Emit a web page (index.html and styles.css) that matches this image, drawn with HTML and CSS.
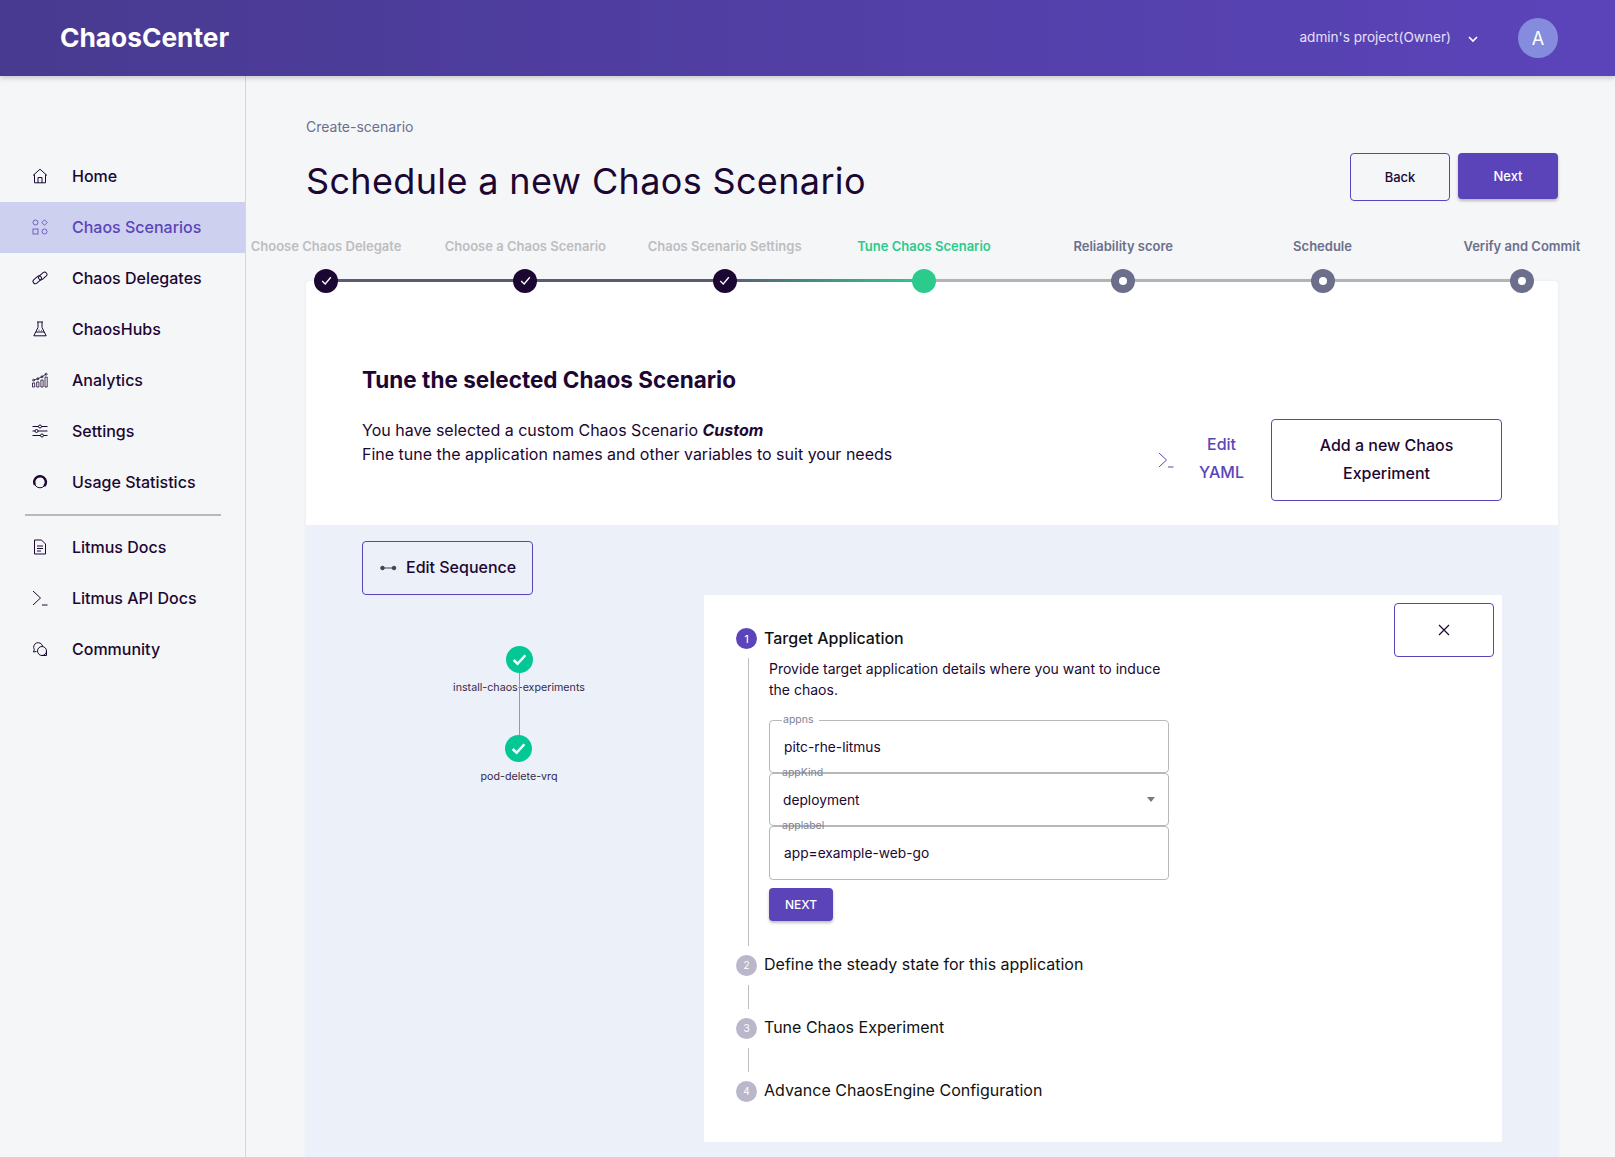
FILE: index.html
```html
<!DOCTYPE html>
<html lang="en">
<head>
  <meta charset="UTF-8">
  <meta name="viewport" content="width=device-width, initial-scale=1.0">
  <title>ChaosCenter</title>
  <link rel="stylesheet" href="styles.css">
</head>
<body>

<header class="topbar">
  <div class="logo">ChaosCenter</div>
  <div class="project">
    <span class="project-name">admin's project(Owner)</span>
    <svg class="chevron" viewBox="0 0 12 8"><path d="M2 2l4 4 4-4"/></svg>
    <div class="avatar">A</div>
  </div>
</header>

<div class="shell">
  <nav class="sidebar">
    <a class="nav-item">
      <svg class="icon" viewBox="0 0 16 16"><path d="M1 7.500L8 1.200l7 6.300M2.500 6.500v8.300h11V6.500M6 14.800V9.500h4v5.300"/></svg>
      Home
    </a>
    <a class="nav-item active">
      <svg class="icon thin" viewBox="0 0 16 16"><circle cx="3.500" cy="3.500" r="2.500"/><path d="M12.500 .8l2.700 2.700-2.700 2.700-2.700-2.700z"/><rect x="1" y="10" width="5" height="5"/><circle cx="12.500" cy="12.500" r="2.500"/></svg>
      Chaos Scenarios
    </a>
    <a class="nav-item">
      <svg class="icon" viewBox="0 0 16 16"><rect x="0.500" y="7.500" width="9.500" height="4.600" rx="2.300" transform="rotate(-40 5.250 9.800)"/><rect x="6" y="3.700" width="9.500" height="4.600" rx="2.300" transform="rotate(-40 10.750 6)"/></svg>
      Chaos Delegates
    </a>
    <a class="nav-item">
      <svg class="icon" viewBox="0 0 16 16"><path d="M5 1h6M6 1v5.500L1.800 14.800h12.400L10 6.500V1M4 11h8"/><circle class="fleck" cx="7" cy="9" r=".5"/><circle class="fleck" cx="9.500" cy="9.800" r=".5"/></svg>
      ChaosHubs
    </a>
    <a class="nav-item">
      <svg class="icon thin" viewBox="0 0 16 16"><path d="M.5 11h2.200v4H.5zM4.700 10h2.200v5H4.700zM8.900 8h2.200v7H8.900zM13 5h2.200v10H13z"/><path d="M1.600 8.200l4-1.400 4.200-2 4.300-2.600"/><circle cx="1.600" cy="8.200" r="1"/><circle cx="5.800" cy="6.800" r="1"/><circle cx="10" cy="4.800" r="1"/><circle cx="14.100" cy="2.200" r="1"/></svg>
      Analytics
    </a>
    <a class="nav-item">
      <svg class="icon" viewBox="0 0 16 16"><path d="M.5 3.500h15M.5 8h15M.5 12.500h15"/><circle class="knob" cx="8" cy="3.500" r="1.500"/><circle class="knob" cx="4.500" cy="8" r="1.500"/><circle class="knob" cx="10" cy="12.500" r="1.500"/></svg>
      Settings
    </a>
    <a class="nav-item">
      <svg class="icon" viewBox="0 0 16 16"><circle cx="8" cy="8" r="5.800"/><circle class="ring-arc" cx="8" cy="8" r="5.800"/></svg>
      Usage Statistics
    </a>
    <div class="nav-divider"></div>
    <a class="nav-item">
      <svg class="icon" viewBox="0 0 16 16"><path d="M2.500 1h7l4 4v10h-11zM5 7h6M5 9.500h6M5 12h4"/></svg>
      Litmus Docs
    </a>
    <a class="nav-item">
      <svg class="icon" viewBox="0 0 16 16"><path d="M1 1l7.500 7L1 15M10 15h5.500"/></svg>
      Litmus API Docs
    </a>
    <a class="nav-item">
      <svg class="icon" viewBox="0 0 16 16"><path d="M4.500 10.500L1.500 11l.8-2.500A4.500 4.500 0 1 1 10.500 5"/><circle cx="10" cy="10" r="4.500"/><path d="M14.500 10v4.500H10"/></svg>
      Community
    </a>
  </nav>

  <main class="main">
    <div class="crumb">Create-scenario</div>
    <div class="title-row">
      <h1>Schedule a new Chaos Scenario</h1>
      <div class="title-actions">
        <button class="btn btn-outline btn-back">Back</button>
        <button class="btn btn-fill btn-next">Next</button>
      </div>
    </div>

    <div class="stepper">
      <div class="step done"><span class="step-label">Choose Chaos Delegate</span><span class="dot"><svg viewBox="0 0 12 12"><path d="M2 6.500l2.800 2.700L10 3"/></svg></span></div>
      <div class="step done"><span class="step-label">Choose a Chaos Scenario</span><span class="dot"><svg viewBox="0 0 12 12"><path d="M2 6.500l2.800 2.700L10 3"/></svg></span></div>
      <div class="step done last-done"><span class="step-label">Chaos Scenario Settings</span><span class="dot"><svg viewBox="0 0 12 12"><path d="M2 6.500l2.800 2.700L10 3"/></svg></span></div>
      <div class="step current"><span class="step-label">Tune Chaos Scenario</span><span class="dot"></span></div>
      <div class="step"><span class="step-label">Reliability score</span><span class="dot"></span></div>
      <div class="step"><span class="step-label">Schedule</span><span class="dot"></span></div>
      <div class="step"><span class="step-label">Verify and Commit</span><span class="dot"></span></div>
    </div>

    <section class="card">
      <div class="card-head">
        <h2>Tune the selected Chaos Scenario</h2>
        <div class="head-row">
          <p class="intro">You have selected a custom Chaos Scenario <b><i>Custom</i></b><br>Fine tune the application names and other variables to suit your needs</p>
          <div class="head-actions">
            <button class="yaml-btn">
              <svg viewBox="0 0 16 16"><path d="M1 1l7.500 7L1 15M10 15h5.500"/></svg>
              <span>Edit<br>YAML</span>
            </button>
            <button class="btn btn-outline btn-add">Add a new Chaos<br>Experiment</button>
          </div>
        </div>
      </div>

      <div class="card-body">
        <button class="btn btn-outline btn-seq">
          <svg viewBox="0 0 18 8"><circle cx="3.500" cy="4" r="1.800"/><circle cx="15" cy="4" r="1.800"/><path d="M3.500 4H15"/></svg>
          Edit Sequence
        </button>

        <div class="workspace">
          <div class="graph">
            <div class="node first">
              <span class="node-dot"><svg viewBox="0 0 16 16"><path d="M2.500 8.500l3.700 3.500 7.300-8"/></svg></span>
              <span class="node-name">install-chaos-experiments</span>
            </div>
            <div class="node">
              <span class="node-dot"><svg viewBox="0 0 16 16"><path d="M2.500 8.500l3.700 3.500 7.300-8"/></svg></span>
              <span class="node-name">pod-delete-vrq</span>
            </div>
          </div>

          <div class="panel">
            <div class="tune-steps">
              <div class="tune-head"><span class="num on">1</span><span class="tune-title">Target Application</span></div>
              <div class="tune-content">
                <p class="tune-desc">Provide target application details where you want to induce the chaos.</p>
                <div class="field notch"><label>appns</label><span>pitc-rhe-litmus</span></div>
                <div class="field select"><label>appKind</label><span>deployment</span><i class="caret"></i></div>
                <div class="field"><label>applabel</label><span>app=example-web-go</span></div>
                <button class="btn btn-fill btn-small">NEXT</button>
              </div>
              <div class="tune-head"><span class="num">2</span><span class="tune-title">Define the steady state for this application</span></div>
              <div class="tune-line"></div>
              <div class="tune-head"><span class="num">3</span><span class="tune-title">Tune Chaos Experiment</span></div>
              <div class="tune-line"></div>
              <div class="tune-head"><span class="num">4</span><span class="tune-title">Advance ChaosEngine Configuration</span></div>
            </div>
            <button class="btn btn-outline btn-close">
              <svg viewBox="0 0 12 12"><path d="M1 1l10 10M11 1L1 11"/></svg>
            </button>
          </div>
        </div>
      </div>
    </section>
  </main>
</div>

</body>
</html>
```

FILE: styles.css
```css
* {
  box-sizing: border-box;
}
html, body {
  height: 100%;
}
body {
  margin: 0;
  overflow: hidden;
  font-family: Inter, "Noto Sans", sans-serif;
  background-color: #f5f6f8;
  color: #1c0732;
}
button {
  font-family: inherit;
  cursor: pointer;
}

/* Top bar */
.topbar {
  position: relative;
  z-index: 3;
  height: 76px;
  display: flex;
  align-items: center;
  justify-content: space-between;
  padding: 0 57px 0 60px;
  background: linear-gradient(90deg, #483a90 0%, #5b44ba 100%);
  box-shadow: 0 2px 5px rgba(0, 0, 0, 0.2);
}
.logo {
  font-size: 26.300px;
  font-weight: 700;
  color: #fff;
  margin-top: -1px;
}
.project {
  display: flex;
  align-items: center;
  font-size: 13.600px;
  color: #e6e0fa;
}
.project-name {
  margin-top: -2px;
}
.chevron {
  width: 12px;
  height: 8px;
  margin: 2px 0 0 16px;
  fill: none;
  stroke: #fff;
  stroke-width: 1.6;
}
.avatar {
  width: 40px;
  height: 40px;
  margin-left: 39px;
  border-radius: 50%;
  display: flex;
  align-items: center;
  justify-content: center;
  background: #858cdd;
  color: #fff;
  font-size: 18px;
}

.shell {
  display: flex;
  height: calc(100vh - 76px);
}

/* Sidebar */
.sidebar {
  flex: 0 0 246px;
  padding-top: 75px;
  border-right: 1px solid #d5d6dc;
}
.nav-item {
  height: 50.9px;
  display: flex;
  align-items: center;
  padding-left: 32px;
  font-size: 16px;
  font-weight: 500;
}
.nav-item.active {
  background: #cdd0ee;
  color: #5b44ba;
}
.nav-divider {
  height: 2px;
  margin: 7px 24px 5.500px 25px;
  background: #b9b9bd;
}
.icon {
  width: 16px;
  height: 16px;
  margin-right: 24px;
  fill: none;
  stroke: #1c0732;
  stroke-width: 1;
}
.active .icon {
  stroke: #5b44ba;
}
.icon.thin {
  stroke-width: 0.8;
}
.ring-arc {
  stroke-width: 2.400;
  stroke-dasharray: 25 12;
  transform: rotate(150deg);
  transform-origin: 8px 8px;
}
.knob {
  fill: #f5f6f8;
}
.fleck {
  fill: #1c0732;
  stroke: none;
}

/* Main column */
.main {
  flex: 1;
  min-width: 0;
  padding: 41px 57px 0 60px;
}
.crumb {
  font-size: 14px;
  line-height: 20px;
  color: #6b6f8c;
}
.title-row {
  display: flex;
  align-items: flex-start;
  justify-content: space-between;
  margin-top: 16px;
  height: 48px;
}
h1 {
  margin: 0;
  font-size: 36px;
  font-weight: 400;
  letter-spacing: 0.350px;
  line-height: 56px;
}
.title-actions {
  display: flex;
  gap: 8px;
}

/* Buttons */
.btn {
  border-radius: 4px;
  font-weight: 500;
}
.btn-outline {
  background: transparent;
  border: 1px solid #5b44ba;
  color: #1c0732;
}
.btn-fill {
  background: #5b44ba;
  border: none;
  color: #fff;
  box-shadow: 0 2px 3px rgba(0, 0, 0, 0.25);
}
.btn-back {
  width: 100px;
  height: 48px;
  font-size: 13px;
}
.btn-next {
  width: 100px;
  height: 46px;
  font-size: 13px;
}

/* Horizontal stepper */
.stepper {
  position: relative;
  z-index: 1;
  display: grid;
  grid-template-columns: repeat(7, 199.3px);
  height: 42px;
  margin: 38px 0 0 -79.600px;
}
.step {
  position: relative;
  display: flex;
  flex-direction: column;
  align-items: center;
}
.step:not(:last-child)::after {
  content: "";
  position: absolute;
  left: 50%;
  top: 40px;
  width: 100%;
  height: 3px;
  background: #b3b3b3;
}
.step.done::after {
  background: #5b5b76;
}
.step.last-done::after {
  background: linear-gradient(90deg, #5b5b76, #2bcb8e);
}
.step-label {
  font-size: 13px;
  font-weight: 600;
  line-height: 16px;
  margin-top: -1px;
  white-space: nowrap;
  color: #6b6f8c;
}
.step.done .step-label {
  color: #bdbdc0;
}
.step.current .step-label {
  color: #2bcb8e;
}
.dot {
  position: relative;
  z-index: 1;
  width: 24px;
  height: 24px;
  margin-top: 14.500px;
  border-radius: 50%;
  background: #6b6f8c;
  display: flex;
  align-items: center;
  justify-content: center;
}
.dot::before {
  content: "";
  width: 8px;
  height: 8px;
  border-radius: 50%;
  background: #fff;
}
.done .dot {
  background: #1c0732;
}
.done .dot::before, .current .dot::before {
  display: none;
}
.current .dot {
  background: #2bcb8e;
}
.dot svg {
  width: 13px;
  height: 13px;
  fill: none;
  stroke: #fff;
  stroke-width: 1.200;
}

/* Card */
.card {
  height: 900px;
  border-radius: 4px 4px 0 0;
  background: #ecf0f9;
  box-shadow: 0 0 4px rgba(0, 0, 0, 0.05);
}
.card-head {
  height: 244px;
  padding: 82px 56px 0;
  border-radius: 4px 4px 0 0;
  background: #fff;
}
h2 {
  margin: 0;
  font-size: 22.500px;
  font-weight: 700;
  line-height: 33px;
}
.head-row {
  display: flex;
  justify-content: space-between;
  margin-top: 22px;
}
.intro {
  margin: 0;
  font-size: 16px;
  line-height: 24px;
}
.head-actions {
  display: flex;
  align-items: center;
  margin-top: 1px;
}
.yaml-btn {
  display: flex;
  align-items: center;
  padding: 0 0 4px;
  border: none;
  background: transparent;
  color: #5b44ba;
  font-size: 16px;
  font-weight: 500;
  line-height: 28px;
}
.yaml-btn svg {
  width: 16px;
  height: 16px;
  margin: 4px 25px 0 0;
  fill: none;
  stroke: #5b44ba;
  stroke-width: 1;
}
.btn-add {
  width: 231px;
  height: 82px;
  margin-left: 27px;
  padding-bottom: 3px;
  font-size: 16px;
  line-height: 28px;
}

/* Lower part of the card */
.card-body {
  padding: 16px 56px 0;
}
.btn-seq {
  display: flex;
  align-items: center;
  width: 171px;
  height: 54px;
  padding: 0 0 2px 16px;
  font-size: 16px;
}
.btn-seq svg {
  width: 18px;
  height: 8px;
  margin: 1px 9px 0 0;
  fill: #444;
  stroke: #444;
  stroke-width: 1;
}
.workspace {
  display: flex;
}
.graph {
  flex: 0 0 342px;
  padding: 51px 28px 0 0;
  display: flex;
  flex-direction: column;
  align-items: center;
}
.node {
  position: relative;
  height: 89px;
  display: flex;
  flex-direction: column;
  align-items: center;
}
.node.first::after {
  content: "";
  position: absolute;
  left: 50%;
  top: 27px;
  width: 1.500px;
  height: 63px;
  margin-left: -0.500px;
  background: #2dcfa5;
}
.node-dot {
  width: 27px;
  height: 27px;
  border-radius: 50%;
  background: #03c794;
  display: flex;
  align-items: center;
  justify-content: center;
}
.node-dot svg {
  width: 17px;
  height: 17px;
  fill: none;
  stroke: #fff;
  stroke-width: 2.400;
}
.node-name {
  margin-top: 8px;
  font-size: 10.700px;
  line-height: 14px;
  white-space: nowrap;
  color: #382a4c;
}

/* White panel */
.panel {
  flex: 1;
  height: 547px;
  display: flex;
  justify-content: space-between;
  align-items: flex-start;
  padding: 33px 8px 0 32px;
  background: #fff;
}
.btn-close {
  width: 100px;
  height: 54px;
  margin-top: -25px;
  display: flex;
  align-items: center;
  justify-content: center;
}
.btn-close svg {
  width: 12px;
  height: 12px;
  stroke: #1c0732;
  stroke-width: 1.200;
}
.tune-steps {
  width: 440px;
}
.tune-head {
  display: flex;
  align-items: center;
  height: 21px;
  font-size: 16px;
  font-weight: 400;
  color: #111;
  white-space: nowrap;
}
.tune-title {
  margin-top: -2px;
}
.tune-head:first-child {
  font-weight: 500;
}
.num {
  width: 21px;
  height: 21px;
  margin-right: 7px;
  border-radius: 50%;
  background: #b9b7c9;
  color: #fff;
  font-size: 10px;
  display: flex;
  align-items: center;
  justify-content: center;
}
.num.on {
  background: #5b44ba;
}
.tune-content {
  margin: 9px 0 9px 12px;
  padding: 0 0 25px 20px;
  border-left: 1px solid #bdbdbd;
}
.tune-line {
  height: 24px;
  margin: 9px 0 9px 12px;
  border-left: 1px solid #bdbdbd;
}
.tune-desc {
  width: 400px;
  margin: 0 0 20px;
  font-size: 14px;
  line-height: 21px;
}
.field {
  position: relative;
  width: 400px;
  height: 53.200px;
  display: flex;
  align-items: center;
  padding-left: 14px;
  border: 1px solid #b8b8b8;
  border-radius: 4px;
  background: #fff;
  font-size: 13.750px;
}
.field label {
  position: absolute;
  left: 12px;
  top: -7px;
  font-size: 10.500px;
  line-height: 12px;
  color: #7d8198;
}
.field.notch label {
  padding: 0 5px 0 1px;
  background: #fff;
}
.field.select {
  padding-left: 13px;
}
.caret {
  position: absolute;
  right: 13px;
  top: 23px;
  border: 4.500px solid transparent;
  border-top: 5px solid #7a7a7a;
  border-bottom: none;
}
.btn-small {
  width: 64px;
  height: 33px;
  margin-top: 8px;
  font-size: 12px;
  display: block;
}
```
